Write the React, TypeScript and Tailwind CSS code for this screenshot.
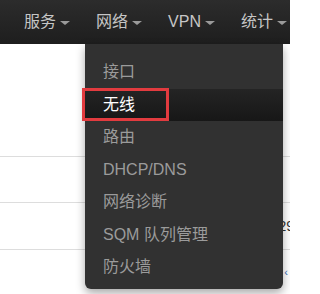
import React from 'react';

const font = { fontFamily: '"Liberation Sans", "Noto Sans CJK SC", sans-serif' };

const Caret = () => (
    <span className="ml-[4px] inline-block w-0 h-0 border-l-[5px] border-r-[5px] border-t-[4px] border-l-transparent border-r-transparent border-t-[#9a9a9a] translate-y-[1px]"></span>
);

const navItems = ['服务', '网络', 'VPN', '统计'];

const menuItems = ['接口', '无线', '路由', 'DHCP/DNS', '网络诊断', 'SQM 队列管理', '防火墙'];

export default function App() {
    return (
        <div className="relative w-[290px] h-[294px] overflow-hidden bg-white" style={font}>
            {/* Top navbar */}
            <div className="h-[44px] bg-gradient-to-b from-[#2c2c2c] to-[#1e1e1e] flex items-center pl-[12px]">
                {navItems.map((item) => (
                    <div key={item} className="flex items-center pl-[12px] pr-[14px] text-[16px] text-[#c6c6c6] whitespace-nowrap leading-none">
                        <span>{item}</span>
                        <Caret />
                    </div>
                ))}
            </div>

            {/* Page content rows behind the menu */}
            <div className="flex flex-col">
                <div className="h-[113px] border-b border-[#dddddd]"></div>
                <div className="h-[46px] border-b border-[#dddddd]"></div>
                <div className="h-[47px] border-b border-[#dddddd] flex items-center justify-end">
                    <span className="text-[14px] text-[#333] mr-[-4px]">29</span>
                </div>
                <div className="h-[44px] flex items-center justify-end">
                    <span className="text-[11px] text-[#3a6fb5] mr-[2px]">‹</span>
                </div>
            </div>

            {/* Dropdown menu */}
            <div className="absolute left-[85px] top-[44px] w-[198px] pt-[12px] pb-[5px] bg-[#313131] rounded-b-[6px] shadow-[0_4px_10px_rgba(0,0,0,0.35)]">
                {menuItems.map((item) => {
                    const active = item === '无线';
                    return (
                        <div
                            key={item}
                            className={
                                active
                                    ? 'h-[32.5px] flex items-center pl-[18px] text-[16px] text-white bg-gradient-to-b from-[#242424] to-[#171717]'
                                    : 'h-[32.5px] flex items-center pl-[18px] text-[16px] text-[#9b9b9b]'
                            }
                        >
                            {item}
                        </div>
                    );
                })}
            </div>

            {/* Red highlight box */}
            <div className="absolute left-[82px] top-[88px] w-[87px] h-[33px] border-[3px] border-[#e23b3f]"></div>
        </div>
    );
}
